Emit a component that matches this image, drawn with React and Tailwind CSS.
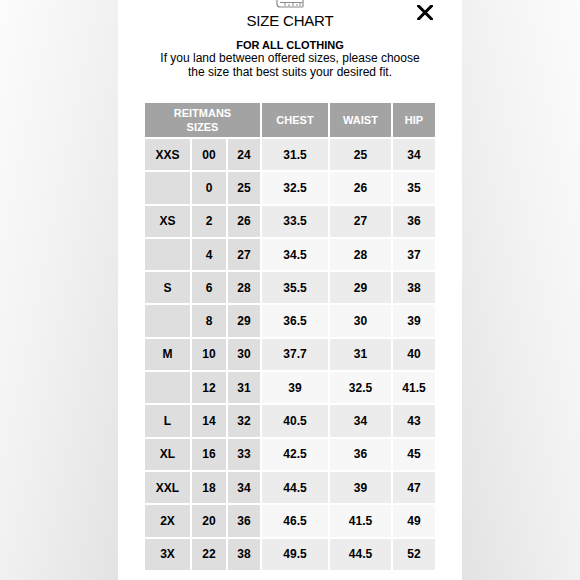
import { useMemo } from 'react';

const rows = [
  ['XXS', '00', '24', '31.5', '25', '34'],
  ['', '0', '25', '32.5', '26', '35'],
  ['XS', '2', '26', '33.5', '27', '36'],
  ['', '4', '27', '34.5', '28', '37'],
  ['S', '6', '28', '35.5', '29', '38'],
  ['', '8', '29', '36.5', '30', '39'],
  ['M', '10', '30', '37.7', '31', '40'],
  ['', '12', '31', '39', '32.5', '41.5'],
  ['L', '14', '32', '40.5', '34', '43'],
  ['XL', '16', '33', '42.5', '36', '45'],
  ['XXL', '18', '34', '44.5', '39', '47'],
  ['2X', '20', '36', '46.5', '41.5', '49'],
  ['3X', '22', '38', '49.5', '44.5', '52'],
];

function TapeIcon() {
  return (
    <svg width="28" height="8" viewBox="0 0 28 8" fill="none" className="block">
      <path d="M1 0 V4 Q1 7 4 7 H26 Q27 7 27 6 V0" stroke="#8a8a8a" strokeWidth="1.2" />
      <path d="M4 2.5 H26" stroke="#8a8a8a" strokeWidth="1" />
      <path d="M9 3 V6 M13 4 V6 M17 3 V6 M21 4 V6 M24 3 V6" stroke="#8a8a8a" strokeWidth="1" />
    </svg>
  );
}

function CloseIcon() {
  return (
    <svg width="16" height="15" viewBox="0 0 16 15" className="block">
      <path d="M1.5 1 L14.5 14 M14.5 1 L1.5 14" stroke="#000" strokeWidth="3" strokeLinecap="square" />
    </svg>
  );
}

export default function App() {
  const cells = useMemo(() => rows, []);

  return (
    <div className="w-[580px] h-[580px] flex overflow-hidden font-['Liberation_Sans',Arial,sans-serif] text-black">
      <div className="w-[118px] h-full bg-linear-to-br from-[#fcfcfc] via-[#f1f1f1] to-[#e3e3e3]" />

      <div className="relative w-[344px] h-full bg-white flex flex-col items-center">
        <TapeIcon />

        <button className="absolute top-[5px] right-[29px]">
          <CloseIcon />
        </button>

        <h1 className="mt-[4px] text-[15px] leading-[18px] tracking-[-0.2px]">SIZE CHART</h1>
        <h2 className="mt-[8px] text-[11px] leading-[14px] font-bold">FOR ALL CLOTHING</h2>
        <p className="text-[12px] leading-[13.5px] text-center w-[264px]">
          If you land between offered sizes, please choose the size that best suits your desired fit.
        </p>

        <div className="mt-[24px] w-[290px] grid grid-cols-[45px_34px_32px_66px_61px_42px] grid-rows-[34px_repeat(13,31.3px)] gap-[2px] text-center">
          <div className="col-span-3 bg-[#a3a3a3] text-white font-bold text-[11px] leading-[14px] flex items-center justify-center">
            REITMANS<br />SIZES
          </div>
          <div className="bg-[#a3a3a3] text-white font-bold text-[11px] flex items-center justify-center">CHEST</div>
          <div className="bg-[#a3a3a3] text-white font-bold text-[11px] flex items-center justify-center">WAIST</div>
          <div className="bg-[#a3a3a3] text-white font-bold text-[11px] flex items-center justify-center">HIP</div>

          {cells.map((r, i) =>
            r.map((v, j) => (
              <div
                key={`${i}-${j}`}
                className={
                  'flex items-center justify-center text-[12px] font-bold ' +
                  (j < 3 ? 'bg-[#dedede]' : i % 2 === 0 ? 'bg-[#ececec]' : 'bg-[#f7f7f7]')
                }
              >
                {v}
              </div>
            ))
          )}
        </div>
      </div>

      <div className="w-[118px] h-full bg-linear-to-bl from-[#fcfcfc] via-[#f1f1f1] to-[#e3e3e3]" />
    </div>
  );
}
